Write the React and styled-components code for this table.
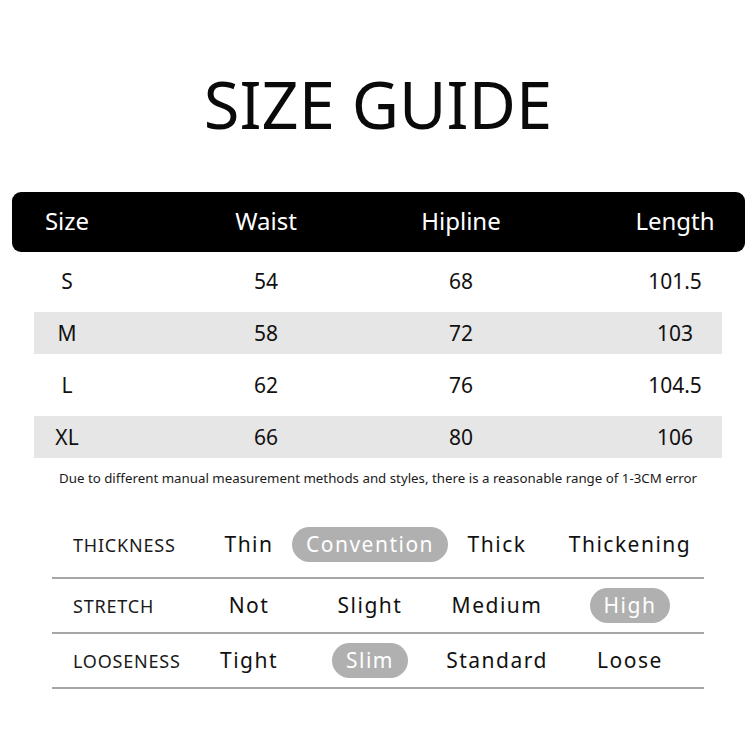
import styled, { createGlobalStyle } from 'styled-components';

const GlobalStyle = createGlobalStyle`
  body {
    margin: 0;
    background: #ffffff;
    font-family: 'Noto Sans', 'Open Sans', sans-serif;
    color: #111111;
  }
`;

const sizes = [
  { size: 'S', waist: '54', hip: '68', length: '101.5', shaded: false },
  { size: 'M', waist: '58', hip: '72', length: '103', shaded: true },
  { size: 'L', waist: '62', hip: '76', length: '104.5', shaded: false },
  { size: 'XL', waist: '66', hip: '80', length: '106', shaded: true },
];

const features = [
  { label: 'THICKNESS', options: ['Thin', 'Convention', 'Thick', 'Thickening'], active: 1 },
  { label: 'STRETCH', options: ['Not', 'Slight', 'Medium', 'High'], active: 3 },
  { label: 'LOOSENESS', options: ['Tight', 'Slim', 'Standard', 'Loose'], active: 1 },
];

const Page = styled.div`
  width: 756px;
  height: 756px;
  display: flex;
  flex-direction: column;
  overflow: hidden;
`;

const Title = styled.h1`
  margin: 64px 0 0;
  font-size: 65px;
  line-height: 80px;
  font-weight: 400;
  text-align: center;
  color: #0a0a0a;
`;

const Table = styled.div`
  margin: 48px 0 0 12px;
  width: 733px;
  display: flex;
  flex-direction: column;
  gap: 10px;
`;

// columnas compartidas por cabecera y filas
const Grid = styled.div`
  display: grid;
  grid-template-columns: 110px 288px 102px 1fr;
  align-items: center;
`;

const HeaderRow = styled(Grid)`
  box-sizing: border-box;
  height: 60px;
  padding-bottom: 3px;
  background: #000000;
  border-radius: 9px;
  color: #ffffff;
  font-size: 24px;
  margin-bottom: -2px;
`;

const BodyRow = styled(Grid)`
  height: 42px;
  font-size: 21px;
  background: ${(p) =>
    p.$shaded
      ? 'linear-gradient(to right, transparent 22px, #e6e6e6 22px, #e6e6e6 calc(100% - 23px), transparent calc(100% - 23px))'
      : 'transparent'};
`;

const Cell = styled.div`
  text-align: center;
  white-space: nowrap;
  ${(p) => p.$end && 'justify-self: end; width: 140px;'}
`;

const Note = styled.p`
  margin: 10px 0 0;
  font-size: 13.3px;
  line-height: 20px;
  text-align: center;
  color: #1a1a1a;
`;

const Features = styled.div`
  margin: 36px 0 0 52px;
  width: 652px;
  display: flex;
  flex-direction: column;
`;

const FeatureRow = styled.div`
  box-sizing: border-box;
  height: 55px;
  display: grid;
  grid-template-columns: 137px 120px 122px 132px 134px;
  align-items: center;
  border-bottom: 2px solid #a6a6a6;
  &:first-child {
    padding-bottom: 12px;
  }
`;

const Label = styled.div`
  padding-left: 21px;
  font-size: 18px;
  letter-spacing: 0.8px;
  color: #1a1a1a;
`;

const Option = styled.div`
  justify-self: center;
  white-space: nowrap;
  font-size: 21px;
  letter-spacing: 1.5px;
  line-height: 35px;
  height: 35px;
  padding: 0 ${(p) => (p.$active ? '14px' : '0')};
  border-radius: 18px;
  background: ${(p) => (p.$active ? '#b0b0b0' : 'transparent')};
  color: ${(p) => (p.$active ? '#ffffff' : '#111111')};
`;

export default function App() {
  return (
    <>
      <GlobalStyle />
      <Page>
        <Title>SIZE GUIDE</Title>
        <Table>
          <HeaderRow>
            <Cell>Size</Cell>
            <Cell>Waist</Cell>
            <Cell>Hipline</Cell>
            <Cell $end>Length</Cell>
          </HeaderRow>
          {sizes.map((row) => (
            <BodyRow key={row.size} $shaded={row.shaded}>
              <Cell>{row.size}</Cell>
              <Cell>{row.waist}</Cell>
              <Cell>{row.hip}</Cell>
              <Cell $end>{row.length}</Cell>
            </BodyRow>
          ))}
        </Table>
        <Note>
          Due to different manual measurement methods and styles, there is a reasonable range of 1-3CM error
        </Note>
        <Features>
          {features.map((f) => (
            <FeatureRow key={f.label}>
              <Label>{f.label}</Label>
              {f.options.map((opt, i) => (
                <Option key={opt} $active={i === f.active}>
                  {opt}
                </Option>
              ))}
            </FeatureRow>
          ))}
        </Features>
      </Page>
    </>
  );
}
